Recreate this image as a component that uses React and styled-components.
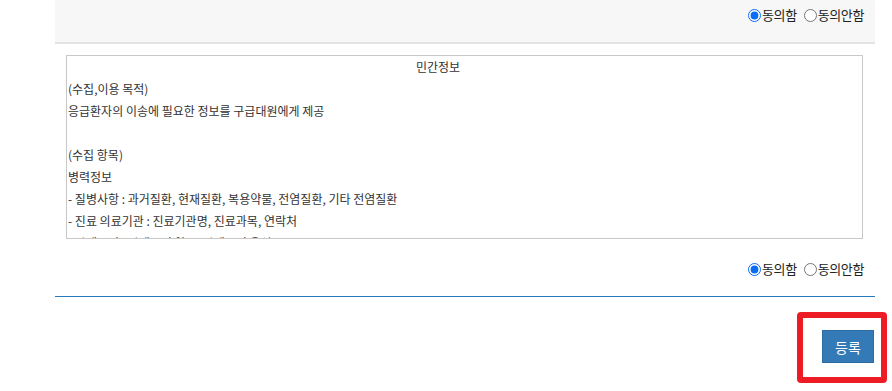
import React from "react";
import styled, { createGlobalStyle } from "styled-components";

const Global = createGlobalStyle`
  html, body { margin: 0; padding: 0; background: #fff; }
  body { font-family: "Noto Sans CJK KR", "Noto Sans", sans-serif; color: #333; }
  * { box-sizing: border-box; }
`;

const Page = styled.div`
  position: relative;
  width: 892px;
  height: 391px;
  overflow: hidden;
`;

const Content = styled.div`
  margin-left: 55px;
  width: 820px;
  display: flex;
  flex-direction: column;
`;

const AgreeBar = styled.div`
  height: 44px;
  background: #f7f7f7;
  border-bottom: 2px solid #e2e2e2;
  display: flex;
  align-items: flex-start;
  justify-content: flex-end;
  padding: 7px 11px 0 0;
`;

const AgreeRow = styled.div`
  display: flex;
  justify-content: flex-end;
  padding: ${(p) => p.$pad || "0"};
`;

const RadioGroup = styled.div`
  display: flex;
  align-items: center;
  gap: 7px;
  font-size: 13px;
  letter-spacing: -0.4px;
  color: #222;
`;

const RadioLabel = styled.label`
  display: flex;
  align-items: center;
  height: 16px;
  line-height: 16px;
`;

const Radio = styled.input`
  margin: 0 1px 0 0;
  width: 13px;
  height: 13px;
  accent-color: #0a6cf5;
`;

const TermsBox = styled.div`
  margin: 11px 12px 0 11px;
  height: 184px;
  border: 1px solid #c8c8c8;
  background: #fff;
  overflow-y: scroll;
  font-size: 12px;
  line-height: 22px;
  letter-spacing: 0;
  color: #333;
  padding: 0 0 0 1px;
  &::-webkit-scrollbar { width: 9px; }
  &::-webkit-scrollbar-track { background: #fff; }
  &::-webkit-scrollbar-thumb {
    background: #c6c6c6;
    border-radius: 3px;
    border: 2px solid #fff;
    border-left-width: 1px;
    border-right-width: 3px;
  }
`;

const Line = styled.div`
  min-height: 22px;
  padding-left: ${(p) => p.$indent || 0}px;
  white-space: nowrap;
`;

const Divider = styled.div`
  margin-top: 19px;
  height: 1px;
  background: #2878bd;
`;

const ButtonRow = styled.div`
  display: flex;
  justify-content: flex-end;
  padding: 33px 1px 0 0;
`;

const SubmitButton = styled.button`
  width: 52px;
  height: 33px;
  background: #337ab7;
  border: 1px solid #2e6da4;
  color: #fff;
  font-family: "Noto Sans CJK KR", sans-serif;
  font-size: 14px;
  padding: 0;
  cursor: pointer;
`;

const Highlight = styled.div`
  position: absolute;
  left: 797px;
  top: 312px;
  width: 90px;
  height: 71px;
  border: 6px solid #ed1c24;
  border-radius: 4px;
  pointer-events: none;
`;

function Agree({ name }) {
  return (
    <RadioGroup>
      <RadioLabel>
        <Radio type="radio" name={name} defaultChecked />
        동의함
      </RadioLabel>
      <RadioLabel>
        <Radio type="radio" name={name} />
        동의안함
      </RadioLabel>
    </RadioGroup>
  );
}

const lines = [
  { t: "민간정보", indent: 348 },
  { t: "(수집,이용 목적)" },
  { t: "응급환자의 이송에 필요한 정보를 구급대원에게 제공" },
  { t: "" },
  { t: "(수집 항목)" },
  { t: "병력정보" },
  { t: "- 질병사항 : 과거질환, 현재질환, 복용약물, 전염질환, 기타 전염질환" },
  { t: "- 진료 의료기관 : 진료기관명, 진료과목, 연락처" },
  { t: "- 알레르기 : 알레르기 약물, 알레르기 음식" },
  { t: "- 기타 특이사항" },
  { t: "" },
  { t: "(보유 및 이용 기간)" },
  { t: "회원 탈퇴 시까지" },
];

export default function App() {
  return (
    <Page>
      <Global />
      <Content>
        <AgreeBar>
          <Agree name="a1" />
        </AgreeBar>
        <TermsBox>
          {lines.map((l, i) => (
            <Line key={i} $indent={l.indent}>
              {l.t}
            </Line>
          ))}
        </TermsBox>
        <AgreeRow $pad="22px 11px 0 0">
          <Agree name="a2" />
        </AgreeRow>
        <Divider />
        <ButtonRow>
          <SubmitButton>등록</SubmitButton>
        </ButtonRow>
      </Content>
      <Highlight />
    </Page>
  );
}
